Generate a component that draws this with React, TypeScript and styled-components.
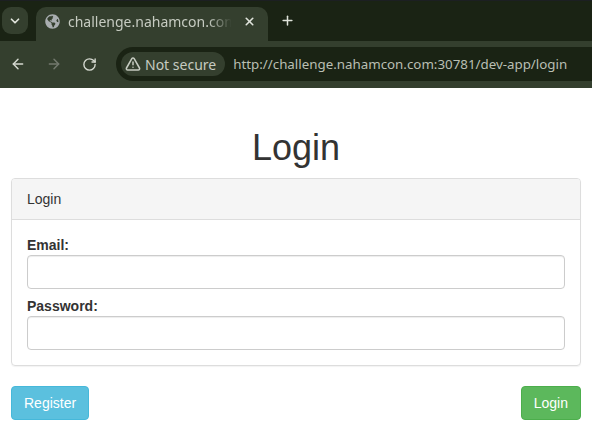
import React from "react";
import styled, { createGlobalStyle } from "styled-components";
import { ArrowLeft, ArrowRight, ChevronDown, Plus, RotateCw, TriangleAlert, X } from "lucide-react";
import { FaGlobeAmericas } from "react-icons/fa";

const GlobalStyle = createGlobalStyle`
  html, body {
    margin: 0;
    padding: 0;
    background: #fff;
    overflow: hidden;
  }
`;

const Page = styled.div`
  width: 592px;
  height: 432px;
  overflow: hidden;
  font-family: "Liberation Sans", Arial, sans-serif;
  color: #333;
`;

const TabStrip = styled.div`
  height: 41px;
  box-sizing: border-box;
  padding: 6px 0 0 2px;
  display: flex;
  align-items: flex-start;
  background: #1a2314;
  border-top: 1px solid #1c1f22;
`;

const TabSearch = styled.div`
  width: 26px;
  height: 27px;
  border-radius: 9px;
  background: #343f2e;
  color: #e0e4dc;
  display: flex;
  align-items: center;
  justify-content: center;
`;

const Tab = styled.div`
  width: 232px;
  height: 34px;
  margin-left: 8px;
  padding: 0 12px 5px 9px;
  box-sizing: border-box;
  border-radius: 10px 10px 0 0;
  background: #343f2e;
  display: flex;
  align-items: center;
  gap: 8px;
  color: #c6cbc1;
  font-family: "Noto Sans", sans-serif;
  font-size: 14px;
`;

const TabTitle = styled.span`
  flex: 1;
  overflow: hidden;
  white-space: nowrap;
  mask-image: linear-gradient(to right, #000 84%, transparent 98%);
`;

const NewTab = styled.div`
  margin: 6px 0 0 12px;
  color: #dfe3da;
  display: flex;
`;

const Toolbar = styled.div`
  height: 47px;
  box-sizing: border-box;
  padding: 6px 0 7px 10px;
  display: flex;
  align-items: center;
  background: #343f2e;
`;

const NavButton = styled.div<{ $dim?: boolean }>`
  width: 36px;
  display: flex;
  color: ${(p) => (p.$dim ? "#73796e" : "#d5d9d0")};
`;

const Omnibox = styled.div`
  flex: 1;
  height: 34px;
  margin-left: -2px;
  padding-left: 5px;
  border-radius: 17px 0 0 17px;
  background: #1a2314;
  display: flex;
  align-items: center;
  font-family: "Noto Sans", sans-serif;
`;

const SecurityChip = styled.div`
  height: 24px;
  padding: 0 9px 0 4px;
  border-radius: 12px;
  background: #343f2e;
  color: #c6cbc1;
  display: flex;
  align-items: center;
  gap: 4px;
  font-size: 14px;
`;

const Url = styled.span`
  margin-left: 8px;
  color: #b9bfb3;
  font-size: 13.33px;
  white-space: nowrap;
`;

const Content = styled.main`
  padding: 0 11px;
`;

const Title = styled.h1`
  margin: 0;
  padding-top: 40px;
  height: 90px;
  box-sizing: border-box;
  text-align: center;
  font-size: 36px;
  font-weight: 400;
  line-height: 40px;
  color: #333;
`;

const Panel = styled.section`
  height: 188px;
  box-sizing: border-box;
  border: 1px solid #ddd;
  border-radius: 4px;
  box-shadow: 0 1px 1px rgba(0, 0, 0, 0.05);
`;

const PanelHeading = styled.div`
  height: 41px;
  box-sizing: border-box;
  padding: 0 15px;
  display: flex;
  align-items: center;
  background: #f5f5f5;
  border-bottom: 1px solid #ddd;
  border-radius: 3px 3px 0 0;
  font-size: 14px;
`;

const PanelBody = styled.div`
  padding: 15px 15px 0;
`;

const Field = styled.div`
  margin-bottom: 7px;
`;

const Label = styled.label`
  display: block;
  height: 20px;
  line-height: 20px;
  font-size: 14px;
  font-weight: 700;
`;

const Input = styled.input`
  display: block;
  width: 100%;
  height: 34px;
  box-sizing: border-box;
  border: 1px solid #ccc;
  border-radius: 4px;
  background: #fff;
  box-shadow: inset 0 1px 1px rgba(0, 0, 0, 0.075);
`;

const Actions = styled.div`
  margin-top: 20px;
  display: flex;
  justify-content: space-between;
`;

const Button = styled.button<{ $tone: "info" | "success" }>`
  height: 34px;
  padding: 0 12px;
  border: 1px solid ${(p) => (p.$tone === "info" ? "#46b8da" : "#4cae4c")};
  border-radius: 4px;
  background: ${(p) => (p.$tone === "info" ? "#5bc0de" : "#5cb85c")};
  color: #fff;
  font-family: inherit;
  font-size: 14px;
`;

export default function App(): JSX.Element {
  return (
    <Page>
      <GlobalStyle />
      <TabStrip>
        <TabSearch>
          <ChevronDown size={14} strokeWidth={3} />
        </TabSearch>
        <Tab>
          <FaGlobeAmericas size={15} color="#a9aeb0" />
          <TabTitle>challenge.nahamcon.com:30781/dev-app/login</TabTitle>
          <X size={13} strokeWidth={3} color="#e0e4dc" />
        </Tab>
        <NewTab>
          <Plus size={15} strokeWidth={2.4} />
        </NewTab>
      </TabStrip>
      <Toolbar>
        <NavButton>
          <ArrowLeft size={16} strokeWidth={2.2} />
        </NavButton>
        <NavButton $dim>
          <ArrowRight size={16} strokeWidth={2.2} />
        </NavButton>
        <NavButton>
          <RotateCw size={15} strokeWidth={2.2} />
        </NavButton>
        <Omnibox>
          <SecurityChip>
            <TriangleAlert size={16} strokeWidth={2.3} />
            Not secure
          </SecurityChip>
          <Url>http://challenge.nahamcon.com:30781/dev-app/login</Url>
        </Omnibox>
      </Toolbar>
      <Content>
        <Title>Login</Title>
        <Panel>
          <PanelHeading>Login</PanelHeading>
          <PanelBody>
            <Field>
              <Label htmlFor="email">Email:</Label>
              <Input id="email" type="text" />
            </Field>
            <Field>
              <Label htmlFor="password">Password:</Label>
              <Input id="password" type="password" />
            </Field>
          </PanelBody>
        </Panel>
        <Actions>
          <Button $tone="info">Register</Button>
          <Button $tone="success">Login</Button>
        </Actions>
      </Content>
    </Page>
  );
}
